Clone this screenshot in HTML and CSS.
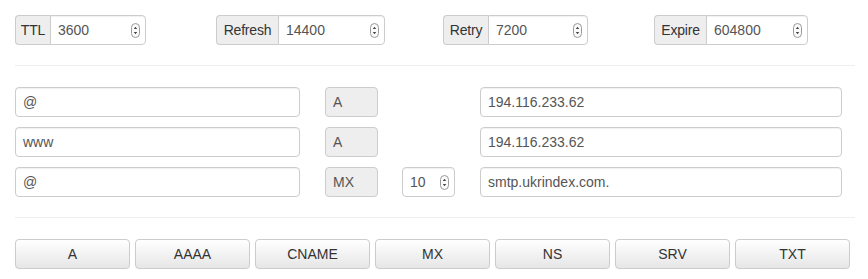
FILE: index.html
```html
<!DOCTYPE html>
<html lang="en">

<head>
    <meta charset="UTF-8">
    <title>DNS Zone</title>
    <link rel="stylesheet" href="styles.css">
</head>

<body>
    <main class="zone">
        <!-- SOA timers -->
        <div class="timers">
            <div class="group group-ttl">
                <span class="addon">TTL</span>
                <div class="field number">3600<svg class="spin" width="9" height="15" viewBox="0 0 9 15"><rect x="0.5" y="0.5" width="8" height="14" rx="4" fill="#fafafa" stroke="#999"/><path d="M2.8 6 L4.5 3.8 L6.2 6 Z M2.8 9 L4.5 11.2 L6.2 9 Z" fill="#444"/></svg></div>
            </div>
            <div class="group group-refresh">
                <span class="addon">Refresh</span>
                <div class="field number">14400<svg class="spin" width="9" height="15" viewBox="0 0 9 15"><rect x="0.5" y="0.5" width="8" height="14" rx="4" fill="#fafafa" stroke="#999"/><path d="M2.8 6 L4.5 3.8 L6.2 6 Z M2.8 9 L4.5 11.2 L6.2 9 Z" fill="#444"/></svg></div>
            </div>
            <div class="group group-retry">
                <span class="addon">Retry</span>
                <div class="field number">7200<svg class="spin" width="9" height="15" viewBox="0 0 9 15"><rect x="0.5" y="0.5" width="8" height="14" rx="4" fill="#fafafa" stroke="#999"/><path d="M2.8 6 L4.5 3.8 L6.2 6 Z M2.8 9 L4.5 11.2 L6.2 9 Z" fill="#444"/></svg></div>
            </div>
            <div class="group group-expire">
                <span class="addon">Expire</span>
                <div class="field number">604800<svg class="spin" width="9" height="15" viewBox="0 0 9 15"><rect x="0.5" y="0.5" width="8" height="14" rx="4" fill="#fafafa" stroke="#999"/><path d="M2.8 6 L4.5 3.8 L6.2 6 Z M2.8 9 L4.5 11.2 L6.2 9 Z" fill="#444"/></svg></div>
            </div>
        </div>

        <hr>

        <!-- Records -->
        <div class="records">
            <div class="record">
                <div class="field name">@</div>
                <div class="field type">A</div>
                <div class="prio"></div>
                <div class="field value">194.116.233.62</div>
            </div>
            <div class="record">
                <div class="field name">www</div>
                <div class="field type">A</div>
                <div class="prio"></div>
                <div class="field value">194.116.233.62</div>
            </div>
            <div class="record">
                <div class="field name">@</div>
                <div class="field type">MX</div>
                <div class="prio">
                    <div class="field number">10<svg class="spin" width="9" height="15" viewBox="0 0 9 15"><rect x="0.5" y="0.5" width="8" height="14" rx="4" fill="#fafafa" stroke="#999"/><path d="M2.8 6 L4.5 3.8 L6.2 6 Z M2.8 9 L4.5 11.2 L6.2 9 Z" fill="#444"/></svg></div>
                </div>
                <div class="field value">smtp.ukrindex.com.</div>
            </div>
        </div>

        <hr>

        <!-- Add record buttons -->
        <div class="add-buttons">
            <button>A</button>
            <button>AAAA</button>
            <button>CNAME</button>
            <button>MX</button>
            <button>NS</button>
            <button>SRV</button>
            <button>TXT</button>
        </div>
    </main>
</body>

</html>
```

FILE: styles.css
```css
* {
    margin: 0;
    padding: 0;
    box-sizing: border-box;
}

:root {
    --border-color: #ccc;
    --addon-bg: #eee;
    --text-color: #555;
    --rule-color: #eee;
}

body {
    font-family: "Liberation Sans", Arial, sans-serif;
    font-size: 14px;
    color: #333;
    background-color: #fff;
}

.zone {
    width: 870px;
    padding: 15px 13px 0 15px;
}

hr {
    border: none;
    border-top: 1px solid var(--rule-color);
    margin: 20px 0 21px;
    width: 840px;
}

/* timers row */
.timers {
    display: flex;
    height: 30px;
}

.group {
    display: flex;
    height: 30px;
}

.group-refresh {
    margin-left: 70px;
}

.group-retry {
    margin-left: 58px;
}

.group-expire {
    margin-left: 66px;
}

.addon {
    display: flex;
    align-items: center;
    justify-content: center;
    background-color: var(--addon-bg);
    border: 1px solid var(--border-color);
    border-right: none;
    border-radius: 4px 0 0 4px;
    color: #333;
    letter-spacing: -0.2px;
}

.group-ttl .addon {
    width: 35px;
}

.group-refresh .addon {
    width: 62px;
}

.group-retry .addon {
    width: 45px;
}

.group-expire .addon {
    width: 52px;
}

.field {
    display: flex;
    align-items: center;
    height: 30px;
    padding: 0 7px;
    border: 1px solid var(--border-color);
    border-radius: 4px;
    color: var(--text-color);
    background-color: #fff;
    box-shadow: inset 0 1px 1px rgba(0, 0, 0, 0.06);
}

.group .field {
    border-radius: 0 4px 4px 0;
}

.number {
    justify-content: space-between;
    padding-right: 5px;
}

.group-ttl .field {
    width: 96px;
}

.group-refresh .field {
    width: 107px;
}

.group-retry .field {
    width: 100px;
}

.group-expire .field {
    width: 102px;
}

/* records */
.records {
    display: flex;
    flex-direction: column;
    gap: 10px;
}

.record {
    display: flex;
    height: 30px;
}

.record .name {
    width: 285px;
}

.record .type {
    width: 53px;
    margin-left: 25px;
    background-color: var(--addon-bg);
    box-shadow: none;
}

.prio {
    width: 53px;
    margin-left: 24px;
}

.prio .field {
    width: 53px;
}

.record .value {
    width: 362px;
    margin-left: 25px;
}

/* add buttons */
.add-buttons {
    display: flex;
    gap: 5px;
}

.add-buttons button {
    width: 115px;
    height: 30px;
    font-family: inherit;
    font-size: 14px;
    color: #333;
    background: linear-gradient(to bottom, #fff 0%, #e6e6e6 100%);
    border: 1px solid var(--border-color);
    border-radius: 4px;
    box-shadow: 0 1px 1px rgba(0, 0, 0, 0.05);
    cursor: pointer;
}
```
